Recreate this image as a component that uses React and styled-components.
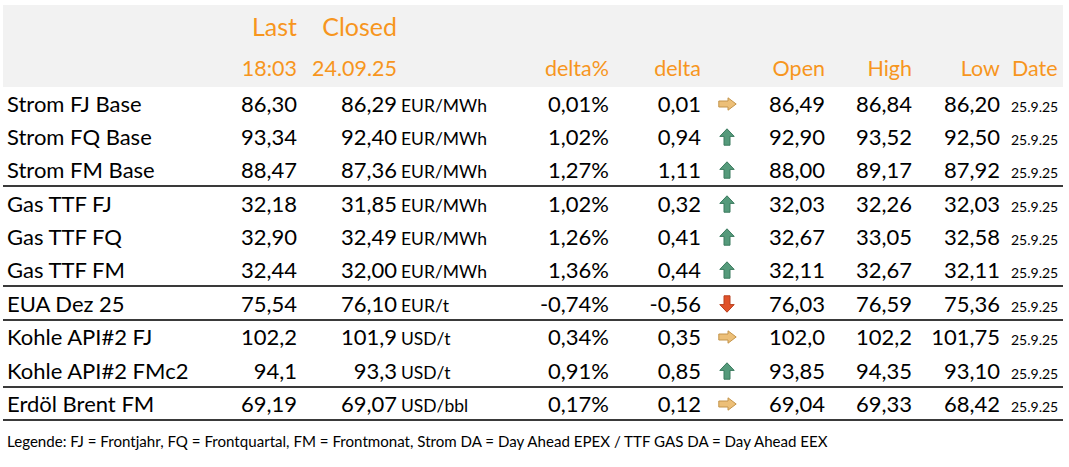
import React from "react";
import styled, { createGlobalStyle } from "styled-components";

const GlobalStyle = createGlobalStyle`
  html, body {
    margin: 0;
    padding: 0;
    background: #fff;
  }
  body {
    font-family: Lato, "Open Sans", sans-serif;
    color: #000;
  }
`;

const COLS = "217px 77px 100px 103px 109px 92px 54px 70px 87px 88px 63px";
const ORANGE = "#f7961e";

const Page = styled.div`
  padding: 5px 6px 0 3px;
  width: 1060px;
`;

const HeadBand = styled.div`
  background: #f2f2f2;
  height: 82px;
  display: flex;
  flex-direction: column;
`;

const Row = styled.div`
  display: grid;
  grid-template-columns: ${COLS};
  align-items: baseline;
  box-sizing: border-box;
  height: ${(p) => p.h}px;
  padding-top: ${(p) => p.pt || 0}px;
  border-bottom: ${(p) => (p.sep ? "2px solid #3a3a3a" : "none")};
`;

const HeadCell = styled.div`
  color: ${ORANGE};
  font-size: ${(p) => p.size}px;
  line-height: ${(p) => p.lh}px;
  text-align: ${(p) => p.align || "right"};
  white-space: nowrap;
  padding-left: ${(p) => p.pl || 0}px;
`;

const Cell = styled.div`
  font-size: ${(p) => p.size || 22}px;
  line-height: 28px;
  text-align: ${(p) => p.align || "right"};
  white-space: nowrap;
  padding-left: ${(p) => p.pl || 0}px;
`;

const ArrowCell = styled.div`
  align-self: start;
  display: flex;
  align-items: center;
  height: 28px;
  padding-left: ${(p) => p.pl}px;
`;

const Legend = styled.div`
  font-size: 15.1px;
  padding: 11px 0 0 4px;
  white-space: nowrap;
`;

const Arrow = ({ dir }) => {
  if (dir === "up")
    return (
      <svg width="16" height="18" viewBox="0 0 16 18">
        <path
          d="M8 0.8 L15.2 8.4 L11 8.4 L11 17.2 L5 17.2 L5 8.4 L0.8 8.4 Z"
          fill="#559a7b"
          stroke="#3b7a5e"
          strokeWidth="1"
          strokeLinejoin="round"
        />
      </svg>
    );
  if (dir === "down")
    return (
      <svg width="16" height="18" viewBox="0 0 16 18">
        <path
          d="M5 0.8 L11 0.8 L11 9.6 L15.2 9.6 L8 17.2 L0.8 9.6 L5 9.6 Z"
          fill="#e0522a"
          stroke="#b9401f"
          strokeWidth="1"
          strokeLinejoin="round"
        />
      </svg>
    );
  return (
    <svg width="19" height="14" viewBox="0 0 19 14">
      <path
        d="M0.8 4 L10 4 L10 0.8 L18.2 7 L10 13.2 L10 10 L0.8 10 Z"
        fill="#ecbf78"
        stroke="#c4944a"
        strokeWidth="1"
        strokeLinejoin="round"
      />
    </svg>
  );
};

const rows = [
  ["Strom FJ Base", "86,30", "86,29", "EUR/MWh", "0,01%", "0,01", "flat", "86,49", "86,84", "86,20"],
  ["Strom FQ Base", "93,34", "92,40", "EUR/MWh", "1,02%", "0,94", "up", "92,90", "93,52", "92,50"],
  ["Strom FM Base", "88,47", "87,36", "EUR/MWh", "1,27%", "1,11", "up", "88,00", "89,17", "87,92", true],
  ["Gas TTF FJ", "32,18", "31,85", "EUR/MWh", "1,02%", "0,32", "up", "32,03", "32,26", "32,03"],
  ["Gas TTF FQ", "32,90", "32,49", "EUR/MWh", "1,26%", "0,41", "up", "32,67", "33,05", "32,58"],
  ["Gas TTF FM", "32,44", "32,00", "EUR/MWh", "1,36%", "0,44", "up", "32,11", "32,67", "32,11", true],
  ["EUA Dez 25", "75,54", "76,10", "EUR/t", "-0,74%", "-0,56", "down", "76,03", "76,59", "75,36", true],
  ["Kohle API#2 FJ", "102,2", "101,9", "USD/t", "0,34%", "0,35", "flat", "102,0", "102,2", "101,75"],
  ["Kohle API#2 FMc2", "94,1", "93,3", "USD/t", "0,91%", "0,85", "up", "93,85", "94,35", "93,10", true],
  ["Erdöl Brent FM", "69,19", "69,07", "USD/bbl", "0,17%", "0,12", "flat", "69,04", "69,33", "68,42", true],
];

export default function App() {
  return (
    <Page>
      <GlobalStyle />
      <HeadBand>
        <Row h={42} pt={4}>
          <div />
          <HeadCell size={25} lh={34}>Last</HeadCell>
          <HeadCell size={25} lh={34}>Closed</HeadCell>
        </Row>
        <Row h={40} pt={6}>
          <div />
          <HeadCell size={21.5} lh={30}>18:03</HeadCell>
          <HeadCell size={21.5} lh={30}>24.09.25</HeadCell>
          <div />
          <HeadCell size={21.5} lh={30}>delta%</HeadCell>
          <HeadCell size={21.5} lh={30}>delta</HeadCell>
          <div />
          <HeadCell size={21.5} lh={30}>Open</HeadCell>
          <HeadCell size={21.5} lh={30}>High</HeadCell>
          <HeadCell size={21.5} lh={30}>Low</HeadCell>
          <HeadCell size={21.5} lh={30} align="left" pl={12}>Date</HeadCell>
        </Row>
      </HeadBand>
      {rows.map((r) => (
        <Row key={r[0]} h={33.4} pt={2.5} sep={r[10] === true}>
          <Cell align="left" pl={4}>{r[0]}</Cell>
          <Cell>{r[1]}</Cell>
          <Cell>{r[2]}</Cell>
          <Cell align="left" pl={4} size={17.5}>{r[3]}</Cell>
          <Cell>{r[4]}</Cell>
          <Cell>{r[5]}</Cell>
          <ArrowCell pl={r[6] === "flat" ? 17 : 18}>
            <Arrow dir={r[6]} />
          </ArrowCell>
          <Cell>{r[7]}</Cell>
          <Cell>{r[8]}</Cell>
          <Cell>{r[9]}</Cell>
          <Cell align="left" pl={11} size={14}>25.9.25</Cell>
        </Row>
      ))}
      <Legend>
        Legende: FJ = Frontjahr, FQ = Frontquartal, FM = Frontmonat, Strom DA = Day Ahead EPEX / TTF GAS DA = Day Ahead EEX
      </Legend>
    </Page>
  );
}
